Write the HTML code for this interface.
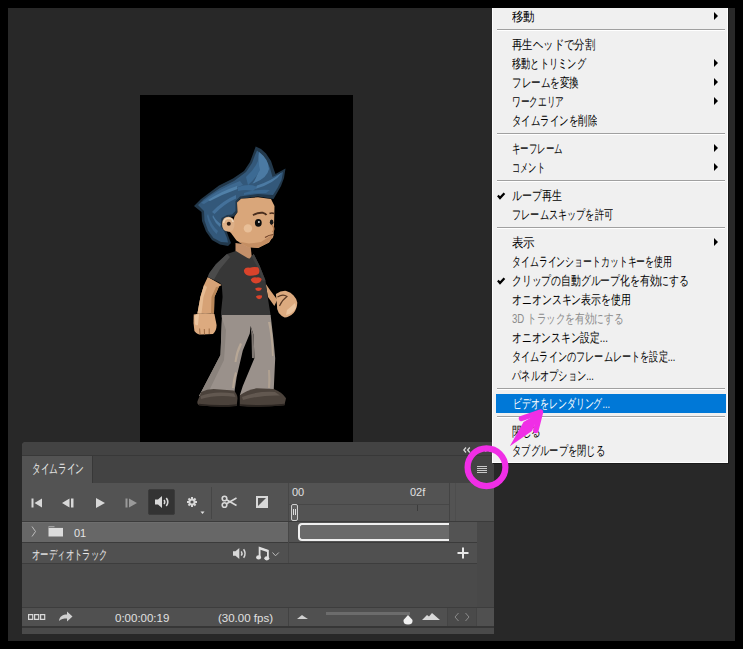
<!DOCTYPE html>
<html><head><meta charset="utf-8">
<style>
*{margin:0;padding:0;box-sizing:border-box}
html,body{width:743px;height:649px;overflow:hidden;background:#000;font-family:"Liberation Sans",sans-serif}
.a{position:absolute}
#ws{left:8px;top:8px;width:727px;height:633px;background:#282828}
#canvas{left:140px;top:95px;width:213px;height:347px;background:#000}
/* panel */
#panel{left:22px;top:442px;width:472px;height:192px;background:#535353;border-top-left-radius:4px;overflow:hidden}
.menu{left:492px;top:0;width:236px;height:463px;background:#f0f0f0;border:1px solid #fdfdfd;border-top:none;box-shadow:1px 1px 0 #1a1a1a}
.mi{position:absolute;left:0;width:234px;height:19px;font-size:13px;line-height:19px;color:#000;padding-left:19px;white-space:nowrap}
.sep{position:absolute;left:4px;width:228px;height:2px;border-top:1px solid #a0a0a0;border-bottom:1px solid #fff}
.chk{position:absolute;left:4px;top:5.5px}
.t{display:inline-block;transform-origin:0 50%}
.arr{position:absolute;right:9px;top:5px;width:0;height:0;border-left:4px solid #000;border-top:4px solid transparent;border-bottom:4px solid transparent}
</style></head><body>
<div id="ws" class="a"></div>
<div id="canvas" class="a"></div>
<svg class="a" style="left:140px;top:95px" width="213" height="347" viewBox="140 95 213 347">
 <!-- hair -->
 <path d="M194 206 L201 199 L207 194.5 L219 185.5 L233 178.5 L244 171 L250 162 L253 154 L255.7 146.5 L261 149 L266 153.5 L271 161 L274 170 L275.5 174 L285.5 168.5 L284 178 L281 186 L277 193 L273.5 199 L258 196.5 L240 199 L237 203 L237.5 212 L234 216.5 L229 217 L224 219 L222.5 225 L226.5 231 L229 238 L231 243 L228 246 L220 244.5 L212 240 L206 231.5 L202 221 L201.5 212 Z" fill="#22384b"/>
 <path d="M198 205 L203.5 199.5 L209 195.5 L220 188 L234 181 L246 172 L252 163 L255 155 L257 150.5 L261.5 154 L266 160 L270 168 L272.5 177 L283 172 L281.5 180 L277.5 188 L273 195 L258 194 L240 196.5 L235.5 201 L235.5 211 L232 214.5 L227 215 L221.5 218 L220.5 226 L224.5 232 L227 238 L228 242.5 L221 242 L213.5 238 L208 230.5 L204.5 220.5 L204 211 Z" fill="#33587a"/>
 <path d="M259 152 Q268.5 159 269 169 Q267 179 252.5 183.5 Q259 175 258.5 166 Q258 158 259 152Z" fill="#4b7aa3"/>
 <path d="M282 172.5 Q274 184 255 189 L257 185.5 Q271 181 282 172.5Z" fill="#4b7aa3"/>
 <path d="M201 203 Q218 189 240 181 L243 185 Q222 192 204 204Z" fill="#3e6990"/>
 <path d="M208 200 Q222 191 237 186 L237.5 189 Q223 194 210 201Z" fill="#5080a8"/>
 <path d="M212 212 Q222 201 236 195 L236 198.5 Q224 204 214.5 214Z" fill="#44719a"/>
 <path d="M208 214 Q211 225 218 231 L216.5 234 Q209 227 207 216Z" fill="#3e6990"/>
 <path d="M213 215 Q216 221 221 224 L220 227 Q215 223 212.5 217Z" fill="#4a78a0"/>
 <path d="M246 177 Q254 170 258 161 L260 170 Q256 178 248 185Z" fill="#3c6a93"/>
 <path d="M238 187 Q250 183 257 187 L253 191 Q246 189 238 191Z" fill="#3c6a93"/>
 <path d="M244 193 Q256 189 270 190 L266 193 Q254 193 244 195Z" fill="#3a6891"/>
 <!-- neck -->
 <path d="M235.5 243 L250.5 245 L252 259 L240 258 L235.5 252 Z" fill="#c4906a"/>
 <!-- face -->
 <path d="M237 202.5 L241 198.8 L258 197.2 L271 199 L274.5 206 L274 227 L273.5 236 L269 242.5 L258 248 L247.5 247 L236.5 240.5 L231 233 L227 229.5 L233 222 L234.5 216.5 L237.5 212.3 Z" fill="#d9a67a"/>
 <path d="M273.5 234 L269 242.5 L258 248 L247.5 247 L238 241.5 L249 243.5 L261 242 L270 236 Z" fill="#c48e63"/>
 <path d="M222 224 Q222.5 216.8 228.5 216.8 Q234.5 217.3 234.5 224 Q234.5 231.8 228.5 231.8 Q222 231.3 222 224Z" fill="#ddb088"/>
 <path d="M223.6 223 Q224 218.3 229 218.3 Q232.5 218.5 233 222" stroke="#f0d6b8" stroke-width="1.6" fill="none"/>
 <circle cx="228.8" cy="223.8" r="2" fill="#2a1a12"/>
 <circle cx="247.9" cy="228.4" r="4.2" fill="#e8bf98"/>
 <ellipse cx="258.3" cy="222.8" rx="3.4" ry="3.9" fill="#0d0d0d"/>
 <circle cx="258.9" cy="221.9" r="1" fill="#d8d8d8"/>
 <ellipse cx="271.6" cy="222.2" rx="1.8" ry="2.7" fill="#1a1a1a"/>
 <path d="M253 215.2 Q257.5 212.2 263 212.8 Q265.5 213.5 266.5 215" stroke="#4a2e1e" stroke-width="1.9" fill="none"/>
 <path d="M269.5 213.5 Q272 212.5 274 213.5" stroke="#4a2c1c" stroke-width="1.5" fill="none"/>
 <path d="M265 237.5 Q269 234.8 273.5 234.5" stroke="#6e4028" stroke-width="1.2" fill="none"/>
 <path d="M267 239.5 Q270 238.5 273 237.5" stroke="#c08a60" stroke-width="1.2" fill="none"/>
 <path d="M272 225 Q275.5 229 272.5 232" stroke="#b27b52" stroke-width="1.2" fill="none"/>
 <!-- left arm -->
 <path d="M207.8 276.9 L204 285 L200.4 297 L197.4 313.5 L214 313.5 L214.4 297 L219 286.5 L221.8 285 Z" fill="#d6a276"/>
 <path d="M204 285 L200.4 297 L197.4 313.5 L201.5 313.5 L203.5 297 L207 287 Z" fill="#e6bb92"/>
 <path d="M219 286.5 L214.4 297 L214 313.5 L211 313.5 L211.5 297 L216 287 Z" fill="#b98658"/>
 <path d="M193.7 314.6 Q193 324 194.4 331 Q197 334.8 201.8 334.6 L213 334 Q216.5 331 216.6 325 L214.4 314 Q204 312 193.7 314.6Z" fill="#dcaa7f"/>
 <path d="M194.5 316 Q196 314 199 314 L198 325 Q196 326 195 324Z" fill="#ebc49e"/>
 <path d="M199.6 328.5 L200 334 M204.3 329 L204.5 334.5 M209.2 328.5 L209.2 334" stroke="#9e6c45" stroke-width="1"/>
 <!-- right arm -->
 <path d="M265.5 283.5 L270 290 L277.3 299.8 L274.4 306 L268 297 Z" fill="#d6a276"/>
 <path d="M275.9 293.9 Q281 290.5 286.2 290.9 Q291 292 293.6 295.4 Q297 299 297.3 302.8 Q297 309 293.6 313.1 Q289 317.5 284.7 317.6 Q281 316 278.8 313.1 Q276.5 309 277 305.7 Z" fill="#dcaa7f"/>
 <path d="M287 310 Q292 306 295 303 L296 308 Q292 314 286 315Z" fill="#ebc49e"/>
 <path d="M277.5 297 Q283 293.5 287 296.5 Q282 300 279.5 306" stroke="#5a3a26" stroke-width="1.1" fill="none"/>
 <!-- shirt -->
 <path d="M235.9 251 L249.2 259.1 L253.7 253.9 L259.6 265.8 L265.5 280.6 L267.7 297 L270.7 316.1 L241.8 319 L221.1 317.6 L221.1 311.7 L222.6 297 L221.8 285 L219.6 282.8 L207.8 276.9 L209.2 273.2 L215.9 264.3 L227 253.9 Z" fill="#373737"/>
 <path d="M227 253.9 L215.9 264.3 L209.2 273.2 L207.8 276.9 L214 279.5 L220 269 L230 257 Z" fill="#4b4b4b"/>
 <path d="M253.7 253.9 L259.6 265.8 L265.5 280.6 L262.5 281 L257.5 267 L251.5 256.5 Z" fill="#414141"/>
 <path d="M244 270 Q245.5 266.8 250 267.8 Q253 266.5 258 267.3 Q260.5 270.5 258.5 274 Q253 276.5 248 275.5 Q243.5 274 244 270Z" fill="#d9432b"/>
 <path d="M250.7 279.5 Q253 276.5 256.5 277.5 Q259.5 276.5 261.8 279 Q261 283 256 283.5 Q251.5 283 250.7 279.5Z" fill="#d9432b"/>
 <path d="M255.1 288.5 Q258 286.8 261.8 288 Q261.5 290.8 258 291 Q255.5 290.6 255.1 288.5Z" fill="#d9432b"/>
 <path d="M255.9 296.5 Q258 294.5 262 295.5 Q262.5 298.5 259 299.2 Q256.5 298.8 255.9 296.5Z" fill="#d9432b"/>
 <!-- pants -->
 <path d="M222 315.1 L270.6 315.1 L273.5 340 L275.2 358.2 L273.7 390.6 L239.8 395.2 L242.8 386 L254.4 358.2 L253.6 335.1 L250.6 325.9 L249.8 333.6 L242.8 350.5 L236.7 376.7 L234.4 392.1 L198.9 396 L201.2 392.1 L220.5 355.1 Z" fill="#9a918b"/>
 <path d="M220.5 355.1 L201.2 392.1 L198.9 396 L207 395 L224 360 L226 330 L222 318Z" fill="#8a827c"/>
 <path d="M240 343 Q235.5 352 234.5 362 L236.5 362 Q238 352 242 344Z" fill="#b7a796"/>
 <path d="M235 372 Q232.5 380 232 388 L234 388 Q235 380 237 373Z" fill="#b5a595"/>
 <path d="M268 322 Q271.5 338 272 356 L273.5 356 Q273.5 338 270.5 322Z" fill="#b7a796"/>
 <path d="M268 370 Q268.5 380 268 388 L270 388 Q271 380 270 370Z" fill="#b0a191"/>
 <path d="M250.6 325.9 L253.6 335.1 L254.4 358.2 L252 358 L251.5 336 Z" fill="#7f7772"/>
 <!-- shoes -->
 <path d="M201.2 392.1 Q207 389 213.6 389 L233.6 390.6 Q237 393 237.5 398.3 L236.7 406 Q218 407.5 198.9 405.2 Q196.5 403 197.4 401.4 Z" fill="#4b423b"/>
 <path d="M239.8 395.2 Q247 390 256.7 388.3 L273.7 389 Q282 392 286 398.3 L284.4 405.2 Q262 407.5 239.8 406 Z" fill="#4b423b"/>
 <path d="M200.5 396 Q214 390.5 234 393.5 L235.5 397 Q216 394.5 201 399Z" fill="#625850"/>
 <path d="M242 397 Q256 391 275 392 L280 395.5 Q260 395 243 400Z" fill="#625850"/>
 <path d="M199 404.5 Q218 407 236.8 405 M240 405 Q262 407 284.5 404.5" stroke="#2b2521" stroke-width="1.6" fill="none"/>
</svg>
<div id="panel" class="a">
 <div class="a" style="left:0;top:0;width:472px;height:13px;background:#434343"></div>
 <div class="a" style="left:0;top:13px;width:472px;height:1px;background:#383838"></div>
 <div class="a" style="left:0;top:14px;width:472px;height:27px;background:#434343"></div>
 <div class="a" style="left:0;top:14px;width:71px;height:27px;background:#535353;border-right:1px solid #383838"></div>
 <div class="a txt" style="left:10px;top:19px;font-size:13px;line-height:16px;color:#e8e8e8"><span id="tabt" style="display:inline-block;transform-origin:0 50%;transform:scaleX(0.667)">タイムライン</span></div>
 <svg class="a" style="left:441px;top:5px" width="8" height="6"><path d="M3 0.5 L0.8 3 L3 5.5 M6.8 0.5 L4.6 3 L6.8 5.5" stroke="#d8d8d8" stroke-width="1.3" fill="none"/></svg>
 <svg class="a" style="left:459px;top:9px" width="10" height="2"><path d="M0 0.5h1.5M4 0.5h1.5M8 0.5h1.5" stroke="#9a9a9a" stroke-width="1"/></svg>
 <svg class="a" style="left:455px;top:24px" width="11" height="8"><path d="M0 0.5H10M0 2.5H10M0 4.5H10M0 6.5H10" stroke="#c8c8c8" stroke-width="1"/></svg>
 <!-- toolbar -->
 <div class="a" style="left:0;top:41px;width:472px;height:38px;background:#535353"></div>
 <svg class="a" style="left:8px;top:55px" width="130" height="12">
  <path d="M1.5 1.5h2v9h-2z M12 1.5 L4.5 6 L12 10.5z" fill="#d8d8d8"/>
  <path d="M39.5 1.5 L32 6 L39.5 10.5z M41 1.5h2.5v9H41z" fill="#d8d8d8"/>
  <path d="M66 1 L75 6 L66 11z" fill="#d8d8d8"/>
  <path d="M95.5 1.5h2v9h-2z M99 1.5 L107 6 L99 10.5z" fill="#9a9a9a"/>
 </svg>
 <div class="a" style="left:126px;top:47px;width:27px;height:26px;background:#333;border:1px solid #3b3b3b;border-radius:2px"></div>
 <svg class="a" style="left:132px;top:53px" width="16" height="14">
  <path d="M1 4.5h3l4-3.5v12l-4-3.5H1z" fill="#d8d8d8"/>
  <path d="M10 5 q1.5 2 0 4 M12.3 3 q3 4 0 8" stroke="#d8d8d8" stroke-width="1.6" fill="none"/>
 </svg>
 <svg class="a" style="left:185px;top:495px;left:163px;top:53px" width="14" height="14">
  <g transform="translate(7 7)" fill="#d8d8d8">
   <circle r="3.6"/>
   <rect x="-1" y="-5" width="2" height="10"/>
   <rect x="-1" y="-5" width="2" height="10" transform="rotate(45)"/>
   <rect x="-1" y="-5" width="2" height="10" transform="rotate(90)"/>
   <rect x="-1" y="-5" width="2" height="10" transform="rotate(135)"/>
   <circle r="1.6" fill="#535353"/>
  </g>
 </svg>
 <svg class="a" style="left:178px;top:69px" width="6" height="4"><path d="M0.5 0.5h4l-2 2.5z" fill="#e0e0e0"/></svg>
 <div class="a" style="left:189px;top:45px;width:1px;height:32px;background:#464646"></div>
 <svg class="a" style="left:199px;top:53px" width="18" height="14">
  <circle cx="3.5" cy="3.5" r="2.3" stroke="#d8d8d8" stroke-width="1.6" fill="none"/>
  <circle cx="3.5" cy="10" r="2.3" stroke="#d8d8d8" stroke-width="1.6" fill="none"/>
  <path d="M5.5 4.8 L15.5 10.5 M5.5 8.8 L15.5 3" stroke="#d8d8d8" stroke-width="1.6"/>
 </svg>
 <svg class="a" style="left:234px;top:54px" width="12" height="12">
  <rect x="1" y="1" width="10" height="10" stroke="#d8d8d8" stroke-width="2" fill="none"/>
  <path d="M11 1 L11 11 L1 11z" fill="#d8d8d8"/>
 </svg>
 <div class="a" style="left:266px;top:41px;width:1px;height:38px;background:#474747"></div>
 <!-- ruler -->
 <div class="a txt" style="left:270px;top:43px;font-size:11px;line-height:14px;color:#e0e0e0">00</div>
 <div class="a txt" style="left:388px;top:43px;font-size:11px;line-height:14px;color:#e0e0e0">02f</div>
 <div class="a" style="left:267px;top:62px;width:160px;height:1px;background:#474747"></div>
 <div class="a" style="left:395px;top:63px;width:1px;height:6px;background:#3c3c3c"></div>
 <div class="a" style="left:427px;top:41px;width:1px;height:80px;background:#444"></div>
 <div class="a" style="left:433px;top:41px;width:1px;height:39px;background:#4d4d4d"></div>
 <div class="a" style="left:269px;top:62px;width:7px;height:17px;background:#606060;border:1px solid #cfcfcf;border-radius:2px"></div>
 <div class="a" style="left:271px;top:67px;width:1px;height:6px;background:#ddd"></div>
 <div class="a" style="left:273px;top:67px;width:1px;height:6px;background:#ddd"></div>
 <div class="a" style="left:0;top:79px;width:472px;height:1px;background:#3b3b3b"></div>
 <!-- layer row -->
 <div class="a" style="left:0;top:101px;width:455px;height:20px;background:#505050"></div>
 <div class="a" style="left:0;top:122px;width:455px;height:43px;background:#4a4a4a"></div>
 <div class="a" style="left:0;top:80px;width:266px;height:20px;background:#676767;border-top:1px solid #6e6e6e"></div>
 <svg class="a" style="left:9px;top:84px" width="6" height="11"><path d="M1 0.5 L4.5 5.5 L1 10.5" stroke="#bdbdbd" stroke-width="1" fill="none"/></svg>
 <svg class="a" style="left:26px;top:83px" width="16" height="12"><path d="M0.5 1.5h6v1h8.5v9H0.5z" fill="#dcdcdc"/><path d="M0.5 2.5h14.5" stroke="#636363" stroke-width="0.8"/></svg>
 <div class="a txt" style="left:52px;top:84px;font-size:11px;line-height:14px;color:#e4e4e4">01</div>
 <div class="a" style="left:276px;top:81px;width:151px;height:18px;background:#6a6a6a;border:2px solid #f0f0f0;border-right:none;border-radius:4px 0 0 4px"></div>
 <div class="a" style="left:427px;top:80px;width:28px;height:20px;background:#535353"></div>
 <div class="a" style="left:455px;top:80px;width:17px;height:86px;background:#484848"></div>
 <div class="a" style="left:0;top:100px;width:455px;height:1px;background:#3b3b3b"></div>
 <!-- audio row -->
 <div class="a txt" style="left:10px;top:106px;font-size:13px;line-height:14px;color:#e8e8e8"><span id="audt" style="display:inline-block;transform-origin:0 50%;transform:scaleX(0.675)">オーディオトラック</span></div>
 <svg class="a" style="left:210px;top:105px" width="16" height="13">
  <path d="M1 4.2h2.5l3.8-3.2v11l-3.8-3.2H1z" fill="#d8d8d8"/>
  <path d="M9.3 4.3 q1.4 2.2 0 4.4 M11.6 2.2 q3 4.3 0 8.6" stroke="#d8d8d8" stroke-width="1.5" fill="none"/>
 </svg>
 <svg class="a" style="left:232px;top:103px" width="28" height="16">
  <path d="M5.6 12 V2.8 L13.9 5.6 V12.5" stroke="#e0e0e0" stroke-width="1.8" fill="none"/>
  <path d="M5.6 2.4 L13.9 5.2 L13.9 7.3 L5.6 4.5z" fill="#e0e0e0"/>
  <ellipse cx="4.6" cy="12.4" rx="2.5" ry="2.1" fill="#e0e0e0"/>
  <ellipse cx="12.8" cy="13.3" rx="2.5" ry="2.1" fill="#e0e0e0"/>
  <path d="M18.5 7.5 L21.5 10.8 L24.8 7.5" stroke="#bdbdbd" stroke-width="1" fill="none"/>
 </svg>
 <div class="a" style="left:266px;top:80px;width:1px;height:41px;background:#474747"></div>
 <svg class="a" style="left:435px;top:105px" width="12" height="12"><path d="M6 0.5v11M0.5 6h11" stroke="#e8e8e8" stroke-width="2"/></svg>
 <div class="a" style="left:0;top:121px;width:455px;height:1px;background:#3d3d3d"></div>
 <!-- empty -->
 <div class="a" style="left:0;top:165px;width:472px;height:1px;background:#3d3d3d"></div>
 <!-- bottom bar -->
 <div class="a" style="left:0;top:166px;width:472px;height:18px;background:#505050"></div>
 <svg class="a" style="left:6px;top:172px" width="18" height="7"><path d="M0.6 0.6h4.1v4.8h-4.1zM6.6 0.6h4.1v4.8h-4.1zM12.6 0.6h4.1v4.8h-4.1z" stroke="#d8d8d8" stroke-width="1.2" fill="none"/></svg>
 <svg class="a" style="left:36px;top:168px" width="16" height="13"><path d="M1 11 C1.5 6 5 4.5 9 4.5 V1.5 L14.5 6.5 L9 11.5 V8.5 C5.5 8.5 3 9 1 11z" fill="#d0d0d0"/></svg>
 <div class="a txt" style="left:93px;top:169px;font-size:11.5px;line-height:14px;color:#e0e0e0">0:00:00:19</div>
 <div class="a txt" style="left:196px;top:169px;font-size:11.5px;line-height:14px;color:#e0e0e0">(30.00 fps)</div>
 <div class="a" style="left:266px;top:166px;width:1px;height:18px;background:#424242"></div>
 <svg class="a" style="left:275px;top:172px" width="12" height="6"><path d="M0 5 L5 1 L7 2.5 L11 5z" fill="#d0d0d0"/></svg>
 <div class="a" style="left:304px;top:170px;width:84px;height:3px;background:#6c6c6c"></div>
 <svg class="a" style="left:380px;top:172px" width="12" height="11"><path d="M6 1 L10.5 6 Q11 10.5 6 10.5 Q1 10.5 1.5 6z" fill="#f0f0f0"/></svg>
 <svg class="a" style="left:400px;top:170px" width="19" height="9"><path d="M0 8 L5 3 L7 4.5 L10 1 L18 8z" fill="#d8d8d8"/></svg>
 <div class="a" style="left:425px;top:166px;width:30px;height:18px;background:#4a4a4a;border-left:1px solid #444;border-right:1px solid #444"></div>
 <svg class="a" style="left:432px;top:170px" width="16" height="10"><path d="M4.5 1 L1 5 L4.5 9 M11.5 1 L15 5 L11.5 9" stroke="#8a8a8a" stroke-width="1" fill="none"/></svg>
 <div class="a" style="left:0;top:184px;width:472px;height:2px;background:#363636"></div>
 <div class="a" style="left:0;top:186px;width:472px;height:6px;background:#4a4a4a"></div>
</div>
<div class="a menu">
<div class="mi" style="top:7px"><span class="t" style="transform:scaleX(0.885)">移動</span><i class="arr"></i></div>
<div class="mi" style="top:35px"><span class="t" style="transform:scaleX(0.798)">再生ヘッドで分割</span></div>
<div class="mi" style="top:54px"><span class="t" style="transform:scaleX(0.712)">移動とトリミング</span><i class="arr"></i></div>
<div class="mi" style="top:73px"><span class="t" style="transform:scaleX(0.736)">フレームを変換</span><i class="arr"></i></div>
<div class="mi" style="top:92px"><span class="t" style="transform:scaleX(0.667)">ワークエリア</span><i class="arr"></i></div>
<div class="mi" style="top:111px"><span class="t" style="transform:scaleX(0.726)">タイムラインを削除</span></div>
<div class="mi" style="top:139px"><span class="t" style="transform:scaleX(0.654)">キーフレーム</span><i class="arr"></i></div>
<div class="mi" style="top:158px"><span class="t" style="transform:scaleX(0.635)">コメント</span><i class="arr"></i></div>
<div class="mi" style="top:186px"><span class="t" style="transform:scaleX(0.769)">ループ再生</span><svg class="chk" width="9" height="8"><path d="M0.9 3.6 L3 6 L7.4 1.2" stroke="#000" stroke-width="2.3" fill="none"/></svg></div>
<div class="mi" style="top:205px"><span class="t" style="transform:scaleX(0.706)">フレームスキップを許可</span></div>
<div class="mi" style="top:233px"><span class="t" style="transform:scaleX(0.885)">表示</span><i class="arr"></i></div>
<div class="mi" style="top:252px"><span class="t" style="transform:scaleX(0.684)">タイムラインショートカットキーを使用</span></div>
<div class="mi" style="top:271px"><span class="t" style="transform:scaleX(0.756)">クリップの自動グループ化を有効にする</span><svg class="chk" width="9" height="8"><path d="M0.9 3.6 L3 6 L7.4 1.2" stroke="#000" stroke-width="2.3" fill="none"/></svg></div>
<div class="mi" style="top:290px"><span class="t" style="transform:scaleX(0.763)">オニオンスキン表示を使用</span></div>
<div class="mi" style="top:309px;color:#8c8c8c"><span class="t" style="transform:scaleX(0.739)">3D トラックを有効にする</span></div>
<div class="mi" style="top:328px"><span class="t" style="transform:scaleX(0.751)">オニオンスキン設定...</span></div>
<div class="mi" style="top:347px"><span class="t" style="transform:scaleX(0.705)">タイムラインのフレームレートを設定...</span></div>
<div class="mi" style="top:366px"><span class="t" style="transform:scaleX(0.714)">パネルオプション...</span></div>
<div class="mi" style="top:394px;background:#0078d7;color:#fff;left:3px;width:230px;padding-left:17px"><span class="t" style="transform:scaleX(0.689)">ビデオをレンダリング...</span></div>
<div class="mi" style="top:422px"><span class="t" style="transform:scaleX(0.744)">閉じる</span></div>
<div class="mi" style="top:441px"><span class="t" style="transform:scaleX(0.715)">タブグループを閉じる</span></div>
<div class="sep" style="top:29px"></div>
<div class="sep" style="top:133px"></div>
<div class="sep" style="top:180px"></div>
<div class="sep" style="top:227px"></div>
<div class="sep" style="top:388px"></div>
<div class="sep" style="top:416px"></div>
</div>
<svg class="a" style="left:0;top:0;z-index:40" width="743" height="649">
 <circle cx="486.5" cy="467.2" r="18.9" stroke="#f02ee6" stroke-width="6.2" fill="none"/>
 <path d="M521.5 418.5 L540.5 412 L535.8 430.5" stroke="#f02ee6" stroke-width="5.5" stroke-linecap="round" stroke-linejoin="round" fill="none"/>
 <path d="M509.8 446.3 L523.5 422 L540.5 412 L532 431 Z" fill="#f02ee6"/>
</svg>
<div class="a" style="left:0;top:0;width:743px;height:8px;background:#000;z-index:50"></div>
<div class="a" style="left:735px;top:0;width:8px;height:649px;background:#000;z-index:50"></div>
<div class="a" style="left:0;top:641px;width:743px;height:8px;background:#000;z-index:50"></div>
<script>
(function(){
 var W=[23, 83, 74, 67, 52, 85, 51, 33, 50, 101, 23, 160, 177, 119, 111, 96, 163.5, 82, 97, 29, 93];
 function fit(el,w){var n=el.offsetWidth; if(n>0){el.style.transform='scaleX('+(w/n).toFixed(4)+')';}}
 var ts=document.querySelectorAll('.mi .t');
 for(var i=0;i<ts.length&&i<W.length;i++){fit(ts[i],W[i]);}
 var a=document.getElementById('tabt'); if(a) fit(a,52);
 var b=document.getElementById('audt'); if(b) fit(b,75.4);
})();
</script>
</body></html>
